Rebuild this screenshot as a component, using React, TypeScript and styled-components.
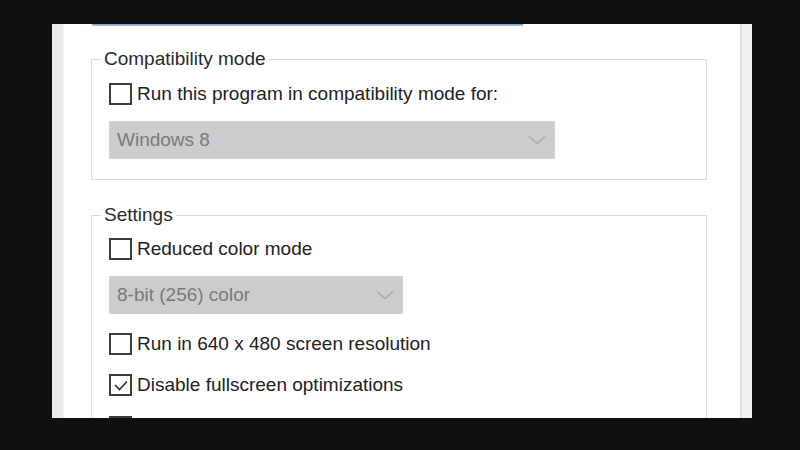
import React from "react";
import styled, { createGlobalStyle } from "styled-components";

const Global = createGlobalStyle`
  html, body { margin: 0; padding: 0; background: #101010; }
  body { font-family: "Liberation Sans", Arial, sans-serif; }
`;

const Stage = styled.div`
  width: 800px;
  height: 450px;
  padding: 24px 0 0 52px;
  box-sizing: border-box;
  background: #101010;
  overflow: hidden;
`;

const Panel = styled.div`
  width: 700px;
  height: 394px;
  display: flex;
  background: #ffffff;
`;

const LeftStrip = styled.div`
  width: 11px;
  background: #ebebeb;
  border-right: 1px solid #f3f3f3;
`;

const RightStrip = styled.div`
  width: 10px;
  background: #f0f0f0;
  border-left: 2px solid #e0e0e0;
`;

const Content = styled.div`
  flex: 1;
  overflow: hidden;
  padding: 0 33px 0 27px;
  display: flex;
  flex-direction: column;
`;

const LinkUnderline = styled.div`
  margin-left: 1px;
  width: 431px;
  height: 2px;
  background: linear-gradient(#6f93bd, #b9cce2);
  flex: none;
`;

const Group = styled.fieldset<{ $top: number; $bottom?: number }>`
  margin: ${(p) => p.$top}px 0 0 0;
  padding: 0 17px ${(p) => p.$bottom ?? 0}px 17px;
  border: 1px solid #dcdcdc;
  display: flex;
  flex-direction: column;
  min-width: 0;
  flex: none;
`;

const Legend = styled.legend`
  font-size: 19px;
  line-height: 22px;
  color: #2a2a2a;
  padding: 0 3px;
  margin-left: -8px;
`;

const Row = styled.label<{ $mt: number }>`
  display: flex;
  align-items: center;
  height: 22px;
  margin-top: ${(p) => p.$mt}px;
  font-size: 19px;
  color: #222;
  gap: 5px;
  white-space: nowrap;
`;

const Box = styled.span`
  width: 23px;
  height: 22px;
  box-sizing: border-box;
  border: 2px solid #3c3c3c;
  display: flex;
  align-items: center;
  justify-content: center;
  flex: none;
`;

const Select = styled.div<{ $w: number; $mt: number }>`
  width: ${(p) => p.$w}px;
  height: 38px;
  margin-top: ${(p) => p.$mt}px;
  box-sizing: border-box;
  background: #cccccc;
  border: 1px solid #d2d2d2;
  display: flex;
  align-items: center;
  justify-content: space-between;
  padding: 0 8px 0 7px;
  font-size: 19px;
  color: #7a7a7a;
`;

const Check = ({ checked, label, mt }: { checked?: boolean; label: string; mt: number }) => (
  <Row $mt={mt}>
    <Box>
      {checked && (
        <svg width="18" height="18" viewBox="0 0 18 18">
          <path d="M3 9 L7.5 13.5 L15 5.5" fill="none" stroke="#333" strokeWidth="1.7" />
        </svg>
      )}
    </Box>
    {label}
  </Row>
);

const Chevron = () => (
  <svg width="18" height="10" viewBox="0 0 18 10">
    <path d="M1 1.5 L9 8.5 L17 1.5" fill="none" stroke="#a9a9a9" strokeWidth="1.4" />
  </svg>
);

export default function App() {
  return (
    <>
      <Global />
      <Stage>
        <Panel>
          <LeftStrip />
          <Content>
            <LinkUnderline />
            <Group $top={22} $bottom={20}>
              <Legend>Compatibility mode</Legend>
              <Check mt={13} label="Run this program in compatibility mode for:" />
              <Select $w={446} $mt={16}>
                <span>Windows 8</span>
                <Chevron />
              </Select>
            </Group>
            <Group $top={24} $bottom={40}>
              <Legend>Settings</Legend>
              <Check mt={12} label="Reduced color mode" />
              <Select $w={294} $mt={16}>
                <span>8-bit (256) color</span>
                <Chevron />
              </Select>
              <Check mt={19} label="Run in 640 x 480 screen resolution" />
              <Check mt={19} checked label="Disable fullscreen optimizations" />
              <Check mt={20} label="Register this program for restart" />
            </Group>
          </Content>
          <RightStrip />
        </Panel>
      </Stage>
    </>
  );
}
